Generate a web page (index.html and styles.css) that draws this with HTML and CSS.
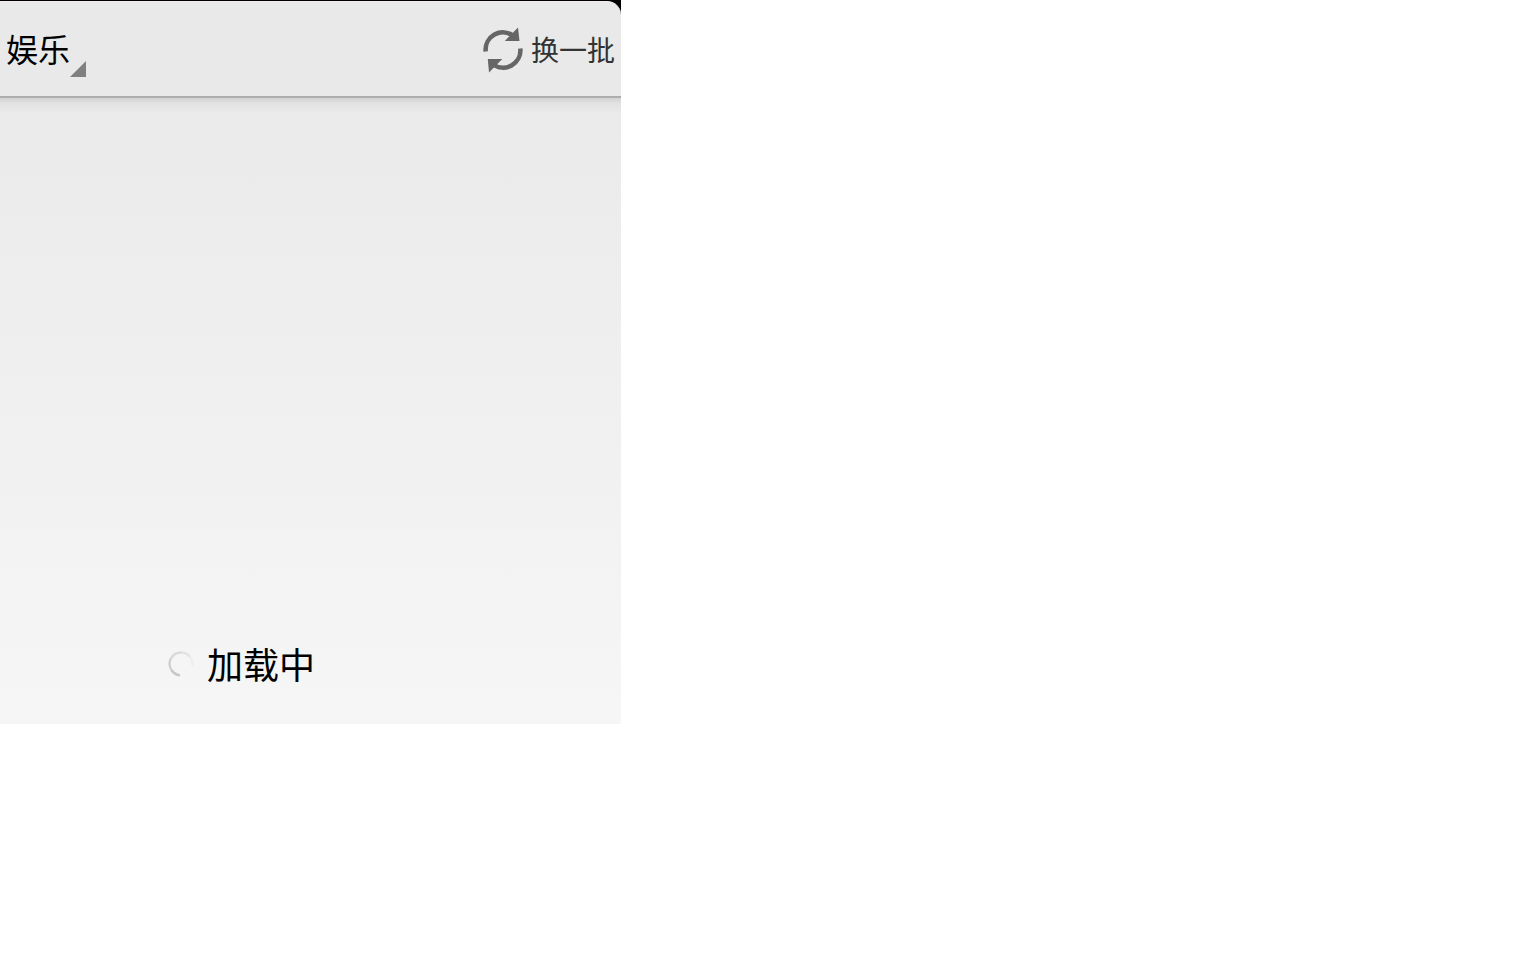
FILE: index.html
```html
<!DOCTYPE html>
<html lang="zh-CN">
<head>
<meta charset="utf-8">
<meta name="viewport" content="width=device-width, initial-scale=1">
<title>娱乐</title>
<link rel="stylesheet" href="styles.css">
</head>
<body>
<div class="screen">
  <header class="bar">
    <button class="category" type="button">
      <span class="category-name">娱乐</span>
      <svg class="corner" viewBox="0 0 16 16" aria-hidden="true"><path d="M16 0V16H0Z"/></svg>
    </button>
    <button class="refresh" type="button">
      <svg class="refresh-icon" viewBox="0 0 40 46" aria-hidden="true">
        <path class="arc" d="M2.7 24.5A17.3 17.3 0 0 1 30.5 9"/>
        <path class="arc" d="M37.3 21.5A17.3 17.3 0 0 1 9.5 37"/>
        <path class="head" d="M35 0.5L36.5 13.9H21.8Z"/>
        <path class="head" d="M6 45.5L4.8 32.1H19.3Z"/>
      </svg>
      <span class="refresh-label">换一批</span>
    </button>
  </header>
  <main class="content">
    <div class="loading" role="status">
      <svg class="spinner" viewBox="0 0 26 26" aria-hidden="true">
        <path class="s1" d="M12 24.4A11.5 11.5 0 0 1 3.5 19"/>
        <path class="s2" d="M3.5 19A11.5 11.5 0 0 1 3 7.3"/>
        <path class="s3" d="M3 7.3A11.5 11.5 0 0 1 13 1.5"/>
        <path class="s4" d="M13 1.5A11.5 11.5 0 0 1 22 6"/>
        <path class="s5" d="M22 6A11.5 11.5 0 0 1 24.3 15"/>
      </svg>
      <span class="loading-label">加载中</span>
    </div>
  </main>
</div>
</body>
</html>
```
FILE: styles.css
```css
* {
  box-sizing: border-box;
}

body {
  margin: 0;
  background: #fff;
  font-family: "Noto Sans CJK SC", sans-serif;
}

.screen {
  max-width: 621px;
  background: #000;
  padding-top: 1px;
}

.bar {
  display: flex;
  justify-content: space-between;
  align-items: center;
  padding: 24px 6px 19px;
  border-top: 1px solid #f5eff3;
  border-bottom: 2px solid #adadad;
  border-radius: 0 14px 0 0;
  background: #e9e9e9;
}

.category,
.refresh {
  display: flex;
  margin: 0;
  padding: 0;
  border: 0;
  background: none;
  font-family: inherit;
}

.category {
  align-items: flex-end;
  color: #000;
  font-size: 32px;
  line-height: 45px;
}

.category-name {
  padding-bottom: 6px;
}

.corner {
  width: 16px;
  height: 16px;
  fill: #808080;
}

.refresh {
  align-items: center;
  gap: 8px;
  padding-bottom: 4px;
  color: #333;
  font-size: 28px;
  line-height: 44px;
}

.refresh-icon {
  width: 40px;
  height: 46px;
}

.refresh-label {
  padding-bottom: 2px;
}

.arc {
  fill: none;
  stroke: #666;
  stroke-width: 4.6;
}

.head {
  fill: #666;
}

.content {
  padding: 540px 0 34px 168px;
  background:
    linear-gradient(rgba(0, 0, 0, 0.1), rgba(0, 0, 0, 0.03) 6px, rgba(0, 0, 0, 0) 16px),
    linear-gradient(#eaeaea, #f6f6f6);
}

.loading {
  display: flex;
  align-items: center;
  gap: 13px;
  color: #000;
  font-size: 36px;
  line-height: 50px;
}

.loading-label {
  padding-bottom: 2px;
}

.spinner {
  width: 26px;
  height: 26px;
  fill: none;
  stroke-width: 2.4;
}

.s1 { stroke: #c6c6c6; }
.s2 { stroke: #d0d0d0; }
.s3 { stroke: #dadada; }
.s4 { stroke: #e3e3e3; }
.s5 { stroke: #ededed; }
```
